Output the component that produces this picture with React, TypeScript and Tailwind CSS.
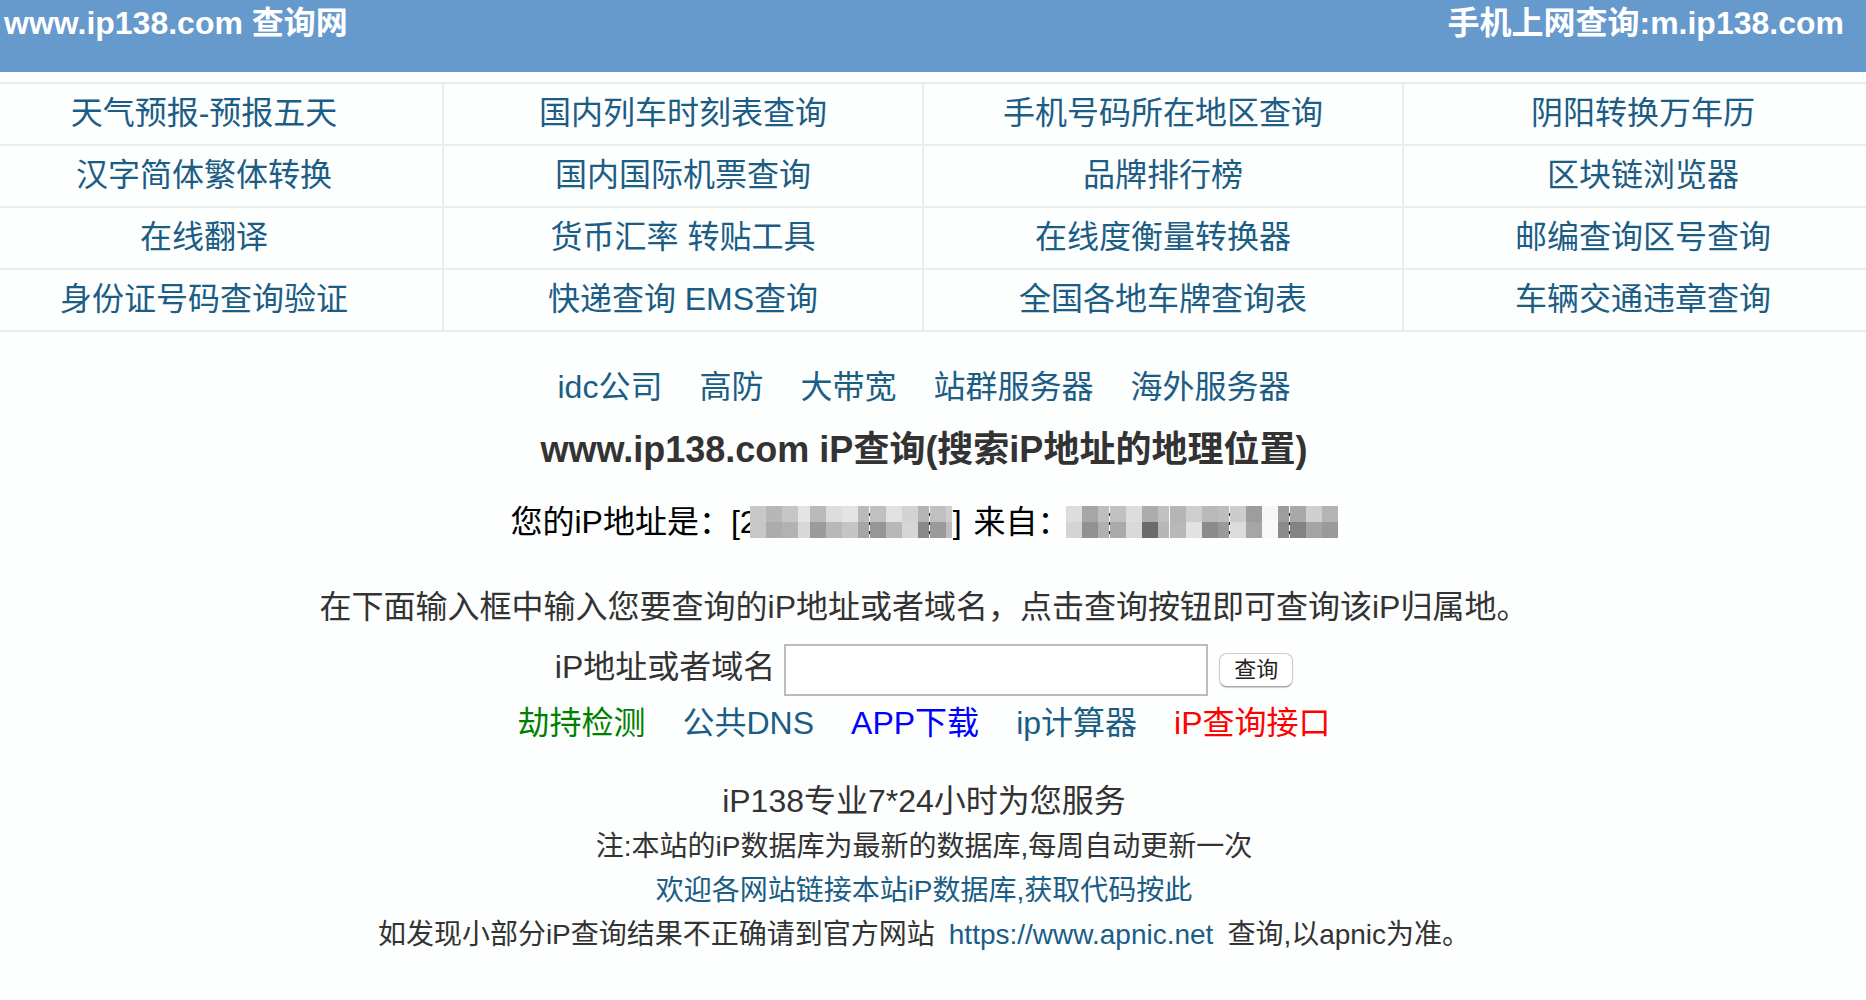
const links = [
  ['天气预报-预报五天', '国内列车时刻表查询', '手机号码所在地区查询', '阴阳转换万年历'],
  ['汉字简体繁体转换', '国内国际机票查询', '品牌排行榜', '区块链浏览器'],
  ['在线翻译', '货币汇率 转贴工具', '在线度衡量转换器', '邮编查询区号查询'],
  ['身份证号码查询验证', '快递查询 EMS查询', '全国各地车牌查询表', '车辆交通违章查询'],
];

const hosting = ['idc公司', '高防', '大带宽', '站群服务器', '海外服务器'];

const services = [
  { label: '劫持检测', tone: 'text-[#008000]' },
  { label: '公共DNS', tone: 'text-[#1b5d85]' },
  { label: 'APP下载', tone: 'text-[#0000ff]' },
  { label: 'ip计算器', tone: 'text-[#1b5d85]' },
  { label: 'iP查询接口', tone: 'text-[#ff0000]' },
];

// Grey levels of the two mosaic rows: [x, width, top, bottom]
const addressMosaic = [
  [0, 16, 200, 199], [16, 16, 183, 172], [32, 16, 198, 178], [48, 12, 228, 216], [60, 16, 186, 155],
  [76, 16, 221, 184], [92, 16, 228, 197], [108, 11, 186, 165], [120, 16, 192, 150], [136, 16, 225, 184],
  [152, 16, 211, 214], [168, 11, 180, 137], [180, 16, 192, 154], [196, 6, 205, 190],
];
const placeMosaic = [
  [0, 16, 221, 212], [16, 16, 166, 145], [32, 11, 190, 176], [44, 16, 193, 170], [60, 16, 221, 217],
  [76, 16, 172, 107], [92, 11, 193, 183], [104, 16, 181, 184], [120, 16, 206, 226], [136, 16, 185, 139],
  [152, 11, 189, 153], [164, 16, 204, 220], [180, 16, 157, 166], [196, 16, 247, 248], [212, 11, 157, 138],
  [224, 16, 168, 131], [240, 16, 207, 164], [256, 16, 180, 154],
];

function Mosaic({ cells, width, seams, className }: { cells: number[][]; width: number; seams: number[]; className: string }) {
  return (
    <svg className={className} width={width} height={32} shapeRendering="crispEdges" role="img" aria-label="已隐藏">
      <rect width={width} height={32} fill="#f7f8f8" />
      {cells.map(([x, w, a, b]) => (
        <g key={x}>
          <rect x={x} y={0} width={w} height={16} fill={`rgb(${a},${a},${a})`} />
          <rect x={x} y={16} width={w} height={16} fill={`rgb(${b},${b},${b})`} />
        </g>
      ))}
      {seams.map((x) => (
        <path key={x} d={`M${x + 0.5} 7v25`} stroke="#222" strokeDasharray="3 6" />
      ))}
    </svg>
  );
}

export default function App() {
  return (
    <div className="min-h-screen bg-[#fdfefe] font-['Liberation_Sans','Noto_Sans_CJK_SC',sans-serif] text-[32px] text-[#333]">
      <header className="flex h-[72px] justify-between bg-[#6699cc] pt-[3px] pr-[22px] pl-1 leading-[40px] font-bold text-white">
        <a href="#home">www.ip138.com 查询网</a>
        <a href="#mobile">手机上网查询:m.ip138.com</a>
      </header>
      <table className="mt-[10px] w-full table-fixed border-separate border-spacing-0 border-t-2 border-[#ebeded]">
        <colgroup><col className="w-[444px]" /><col className="w-[480px]" /><col className="w-[480px]" /><col /></colgroup>
        <tbody>
          {links.map((row) => (
            <tr key={row[0]} className="h-[62px]">
              {row.map((t) => (
                <td key={t} className="border-r-2 border-b-2 border-[#ebeded] pb-[2px] text-center leading-[48px] text-[#1b5d85] first:pr-[34px] last:border-r-0 last:pl-4"><a href="#tool">{t}</a></td>
              ))}
            </tr>
          ))}
        </tbody>
      </table>

      <main className="flex flex-col items-center pt-[31px] pr-[18px]">
        <nav className="flex gap-[37px] leading-[48px] text-[#1b5d85]">
          {hosting.map((t) => <a key={t} href="#hosting">{t}</a>)}
        </nav>
        <h1 className="mt-3 text-[36px] leading-[54px] font-bold">www.ip138.com iP查询(搜索iP地址的地理位置)</h1>
        <p className="mt-[21px] flex items-center leading-[48px] text-black">
          <span>您的iP地址是：[2</span>
          <Mosaic cells={addressMosaic} width={202} seams={[119, 179]} className="-ml-2 shrink-0" />
          <span className="ml-px">]</span>
          <span className="ml-3">来自：</span>
          <Mosaic cells={placeMosaic} width={272} seams={[43, 163, 223]} className="-ml-1 shrink-0" />
        </p>
        <p className="mt-[37px] leading-[48px]">在下面输入框中输入您要查询的iP地址或者域名，点击查询按钮即可查询该iP归属地。</p>
        <form className="mt-[13px] flex items-center" onSubmit={(e) => e.preventDefault()}>
          <label htmlFor="query" className="mb-[6px] leading-[44px]">iP地址或者域名</label>
          <input id="query" type="text" className="ml-[9px] h-[52px] w-[424px] border-2 border-[#bbb] bg-white px-2 outline-none" />
          <button type="submit" className="ml-[11px] h-[34px] w-[74px] rounded-[8px] border border-[#ccc] border-b-[#aaa] bg-white text-[22px] leading-[30px] text-[#222] shadow-[0_1px_1px_#ccc]">查询</button>
        </form>
        <nav className="mt-[3px] flex gap-[37px] leading-[48px]">
          {services.map((s) => <a key={s.label} href="#service" className={s.tone}>{s.label}</a>)}
        </nav>
        <p className="mt-[30px] leading-[48px]">iP138专业7*24小时为您服务</p>
        <div className="text-center text-[28px] leading-[44px]">
          <p>注:本站的iP数据库为最新的数据库,每周自动更新一次</p>
          <p><a href="#code" className="text-[#1b5d85]">欢迎各网站链接本站iP数据库,获取代码按此</a></p>
          <p>如发现小部分iP查询结果不正确请到官方网站<a href="#apnic" className="mx-[14px] text-[#1b5d85]">https://www.apnic.net</a>查询,以apnic为准。</p>
        </div>
      </main>
    </div>
  );
}
